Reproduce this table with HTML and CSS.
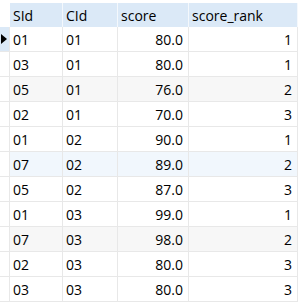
FILE: index.html
```html
<!DOCTYPE html>
<html lang="en">
<head>
  <meta charset="UTF-8" />
  <title>score_rank</title>
  <link rel="stylesheet" href="styles.css">
</head>
<body>
  <div class="grid">
    <div class="row head">
      <div class="gutter"></div>
      <div class="cell">SId</div>
      <div class="cell">CId</div>
      <div class="cell">score</div>
      <div class="cell">score_rank</div>
    </div>
    <div class="row current">
      <div class="gutter"><span class="caret"></span></div>
      <div class="cell">01</div><div class="cell">01</div>
      <div class="cell num">80.0</div><div class="cell num">1</div>
    </div>
    <div class="row">
      <div class="gutter"></div>
      <div class="cell">03</div><div class="cell">01</div>
      <div class="cell num">80.0</div><div class="cell num">1</div>
    </div>
    <div class="row alt">
      <div class="gutter"></div>
      <div class="cell">05</div><div class="cell">01</div>
      <div class="cell num">76.0</div><div class="cell num">2</div>
    </div>
    <div class="row">
      <div class="gutter"></div>
      <div class="cell">02</div><div class="cell">01</div>
      <div class="cell num">70.0</div><div class="cell num">3</div>
    </div>
    <div class="row">
      <div class="gutter"></div>
      <div class="cell">01</div><div class="cell">02</div>
      <div class="cell num">90.0</div><div class="cell num">1</div>
    </div>
    <div class="row hover">
      <div class="gutter"></div>
      <div class="cell">07</div><div class="cell">02</div>
      <div class="cell num">89.0</div><div class="cell num">2</div>
    </div>
    <div class="row">
      <div class="gutter"></div>
      <div class="cell">05</div><div class="cell">02</div>
      <div class="cell num">87.0</div><div class="cell num">3</div>
    </div>
    <div class="row">
      <div class="gutter"></div>
      <div class="cell">01</div><div class="cell">03</div>
      <div class="cell num">99.0</div><div class="cell num">1</div>
    </div>
    <div class="row alt">
      <div class="gutter"></div>
      <div class="cell">07</div><div class="cell">03</div>
      <div class="cell num">98.0</div><div class="cell num">2</div>
    </div>
    <div class="row">
      <div class="gutter"></div>
      <div class="cell">02</div><div class="cell">03</div>
      <div class="cell num">80.0</div><div class="cell num">3</div>
    </div>
    <div class="row">
      <div class="gutter"></div>
      <div class="cell">03</div><div class="cell">03</div>
      <div class="cell num">80.0</div><div class="cell num">3</div>
    </div>
  </div>
</body>
</html>
```

FILE: styles.css
```css
/* base */
:root {
  --line: #e8e8e8;
  --head: #dbe9f7;
  --alt: #f7f7f7;
  --hover: #f1f7fd;
  --text: #000000;
}
* { box-sizing: border-box; margin: 0; padding: 0; }
body {
  font-family: "Open Sans", "Noto Sans CJK SC", sans-serif;
  font-size: 14px;
  color: var(--text);
  background: #ffffff;
  padding-top: 3px;
}

/* grid */
.grid { width: 298px; }
.row {
  display: grid;
  grid-template-columns: 10px 53px 55px 71px 109px;
  height: 25px;
  border-bottom: 1px solid var(--line);
}
.cell {
  border-right: 1px solid var(--line);
  padding: 0 5px 0 3px;
  display: flex;
  align-items: center;
  white-space: nowrap;
}
.cell.num { justify-content: flex-end; }
.gutter {
  border-right: 1px solid var(--line);
  display: flex;
  align-items: center;
}

/* header */
.row.head { height: 24px; border-bottom: none; }
.row.head .cell { background: var(--head); border-right-color: #f4f8fc; }
.row.head .gutter { background: #ffffff; border-right: none; }

/* row states */
.row.alt .cell { background: var(--alt); }
.row.hover .cell { background: var(--hover); }
.row.current .gutter { background: var(--head); }
.caret {
  width: 0; height: 0;
  margin-left: 1px;
  border-top: 5px solid transparent;
  border-bottom: 5px solid transparent;
  border-left: 6px solid #000000;
}
```
